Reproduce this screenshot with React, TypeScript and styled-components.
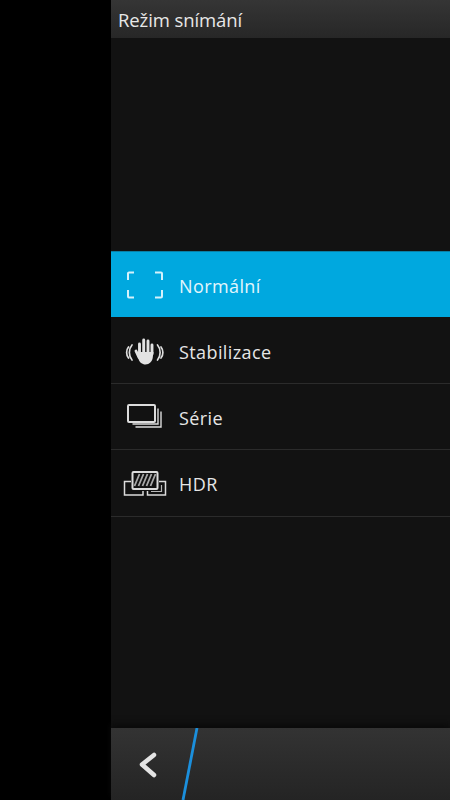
import React from "react";
import styled, { createGlobalStyle } from "styled-components";

const GlobalStyle = createGlobalStyle`
	html, body {
		margin: 0;
		padding: 0;
		background: #000;
		overflow: hidden;
	}
`;

const Screen = styled.div`
	width: 450px;
	height: 800px;
	display: flex;
	background: #000;
	font-family: "Open Sans", "Noto Sans", sans-serif;
`;

const LeftGap = styled.div`
	width: 111px;
	flex: none;
	background: #000;
`;

const Panel = styled.div`
	flex: 1;
	display: flex;
	flex-direction: column;
	background: #121212;
`;

const Header = styled.div`
	height: 38px;
	flex: none;
	box-sizing: border-box;
	padding-left: 7px;
	display: flex;
	align-items: center;
	background: linear-gradient(#353535, #272727);
	color: #e8e8e8;
	font-size: 18.5px;
	letter-spacing: -0.1px;
`;

const List = styled.div`
	flex: 1;
	padding-top: 213px;
`;

const Row = styled.div<{ $active?: boolean }>`
	height: 66.4px;
	box-sizing: border-box;
	padding-top: 2px;
	display: flex;
	align-items: center;
	background: ${(p) => (p.$active ? "#00a8df" : "transparent")};
	border-bottom: 1px solid ${(p) => (p.$active ? "#00a8df" : "#2b2b2b")};
	border-top: ${(p) => (p.$active ? "1px solid #0a7fa6" : "none")};
	color: ${(p) => (p.$active ? "#e4f6fc" : "#e6e6e6")};
`;

const IconSlot = styled.div`
	width: 68px;
	flex: none;
	display: flex;
	justify-content: center;
	svg {
		display: block;
	}
`;

const Label = styled.div`
	font-size: 18px;
	letter-spacing: 0.4px;
	line-height: 20px;
	padding-top: 1px;
`;

const BottomBar = styled.div`
	height: 72px;
	flex: none;
	display: flex;
	background: linear-gradient(#333, #242424);
	box-shadow: 0 -4px 6px #0b0b0b;
`;

const BackButton = styled.div`
	width: 90px;
	height: 72px;
	flex: none;
	svg {
		display: block;
	}
`;

const FocusIcon = () => (
	<svg width="38" height="28" viewBox="0 0 38 28" fill="none" stroke="#d5f1fb" strokeWidth="2">
		<path d="M2 9V2.500a1 1 0 0 1 1-1H8M29 1.500h6a1 1 0 0 1 1 1V9M2 19v6.500a1 1 0 0 0 1 1H8M29 26.500h6a1 1 0 0 0 1-1V19" />
	</svg>
);

const HandIcon = () => (
	<svg width="42" height="28" viewBox="0 0 42 28" fill="none">
		<path
			d="M4.500 10C2 13 2 18 4.500 21M8 8C4.500 12 4.500 19 8 23M37 10c2.500 3 2.500 8 0 11M33.500 8c3.500 4 3.500 11 0 15"
			stroke="#dcdcdc"
			strokeWidth="1.700"
			strokeLinecap="round"
		/>
		<path
			d="M15.500 17V7M19.700 16V3M24 16V4M28 17V8M12 14l3 6.500"
			stroke="#e2e2e2"
			strokeWidth="2.900"
			strokeLinecap="round"
		/>
		<path
			d="M14 15h15.500l-.800 6c-.600 3.500-3.300 6.500-7.200 6.500-3.500 0-6-2.300-7-5.500z"
			fill="#e2e2e2"
		/>
	</svg>
);

const BurstIcon = () => (
	<svg width="36" height="26" viewBox="0 0 36 26" fill="none" stroke="#dcdcdc">
		<rect x="1" y="1" width="27" height="17" rx="1" strokeWidth="2" />
		<path d="M31 4.500v15.500H5.500M34 7.500v15.500H8.500" strokeWidth="1.400" />
	</svg>
);

const HdrIcon = () => (
	<svg width="44" height="26" viewBox="0 0 44 26" fill="none" stroke="#dcdcdc">
		<rect x="9.500" y="1" width="25" height="17" rx="1" strokeWidth="2" />
		<path
			d="M11.500 15l5-12M15.500 15l5-12M19.500 15l5-12M23.500 15l5-12M27.500 15l5-12"
			strokeWidth="1.800"
			stroke="#a8a8a8"
		/>
		<path d="M8 10.500H1.500v13.500H20v-4M36 10.500h6.500v13.500H24.500v-4" strokeWidth="1.500" />
		<path d="M38.500 14v6.500H28" strokeWidth="1.200" stroke="#b8b8b8" />
	</svg>
);

const modes = [
	{ label: "Normální", icon: <FocusIcon />, active: true },
	{ label: "Stabilizace", icon: <HandIcon /> },
	{ label: "Série", icon: <BurstIcon /> },
	{ label: "HDR", icon: <HdrIcon /> },
];

const App = () => (
	<Screen>
		<GlobalStyle />
		<LeftGap />
		<Panel>
			<Header>Režim snímání</Header>
			<List>
				{modes.map((m) => (
					<Row key={m.label} $active={m.active}>
						<IconSlot>{m.icon}</IconSlot>
						<Label>{m.label}</Label>
					</Row>
				))}
			</List>
			<BottomBar>
				<BackButton>
					<svg width="90" height="72" viewBox="0 0 90 72" fill="none">
						<path d="M43 27L31 36.500L43 47" stroke="#e4e4e4" strokeWidth="4.500" strokeLinecap="round" strokeLinejoin="round" />
						<path d="M86 0L72 72" stroke="#1b8fdc" strokeWidth="2.800" />
					</svg>
				</BackButton>
			</BottomBar>
		</Panel>
	</Screen>
);

export default App;
